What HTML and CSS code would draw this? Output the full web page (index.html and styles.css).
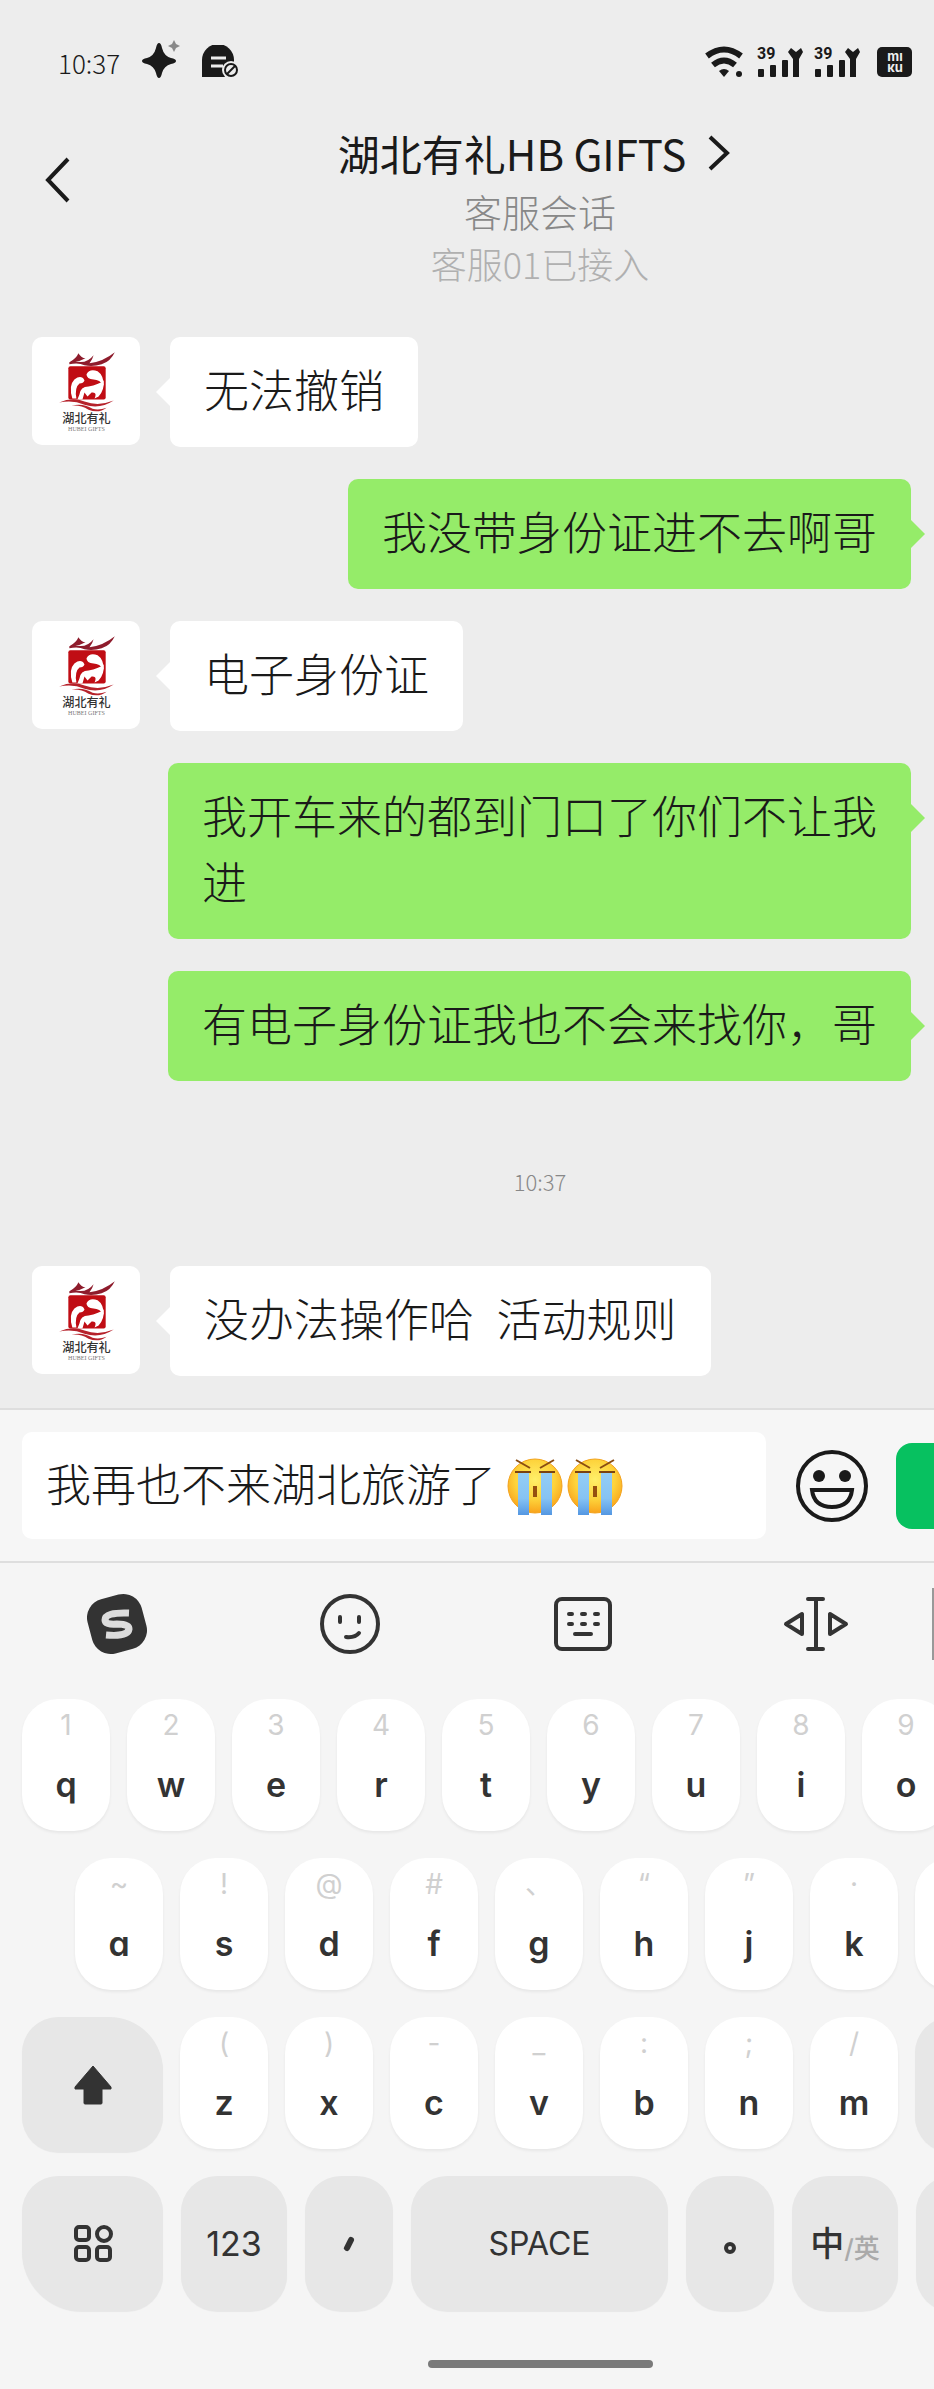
FILE: index.html
```html
<!DOCTYPE html>
<html lang="zh-CN">
<head>
    <meta charset="UTF-8">
    <meta name="viewport" content="width=device-width, initial-scale=1.0">
    <title>湖北有礼HB GIFTS</title>
    <link rel="stylesheet" href="styles.css">
</head>
<body>

    <!-- Shared drawings -->
    <svg class="symbols" aria-hidden="true">
        <symbol id="logo" viewBox="0 0 107 107">
            <path d="M37 25 Q44 21 46 16 Q49 21 53 21 Q48 24 43 24 Q54 27 61 18 Q60 22 57 26 Q71 24 82 15 Q78 24 69 27 Q60 30 52 28 Q46 25 37 27 Z" fill="#8e1c2c"/>
            <rect x="36" y="29" width="37" height="33" rx="2" fill="#c00d14"/>
            <path d="M40 61 Q36 48 42 42 Q49 37 52 43 Q51 46 47 46 Q42 50 44 61 Z" fill="#fff"/>
            <path d="M54 37 Q57 31 65 34 Q71 38 71 48 Q67 42 61 42 Q54 42 54 37 Z" fill="#fff"/>
            <path d="M47 57 Q48 49 56 49 Q66 47 71 43 Q72 52 66 59 L62 61 Q65 54 59 55 L55 59 L52 55 L50 62 L45 62 Z" fill="#fff"/>
            <path d="M27 65 Q40 59 52 64 Q66 69 81 63 Q67 72 52 67 Q40 62 27 65 Z" fill="#b6222b"/>
            <path d="M39 68 Q50 65 60 71 Q66 73 74 70 Q66 76 56 72 Q48 67 39 68 Z" fill="#b6222b"/>
            <text x="54" y="85" text-anchor="middle" class="logo-name">湖北有礼</text>
            <text x="54" y="93" text-anchor="middle" class="logo-sub">HUBEI GIFTS</text>
        </symbol>
        <symbol id="signal" viewBox="0 0 46 32">
            <text x="0" y="13" class="signal-text">39</text>
            <g fill="#1a1a1a">
                <rect x="1" y="23" width="6" height="8" rx="1"/>
                <rect x="13" y="19" width="6" height="12" rx="1"/>
                <rect x="25" y="14" width="6" height="17" rx="1"/>
                <path d="M36 31 V13 L31 6 L34 2 L39 6 L44 2 L46 6 L42 13 V31 Z"/>
            </g>
        </symbol>
        <symbol id="cry" viewBox="0 0 56 60">
            <circle cx="28" cy="30" r="27" fill="url(#face)" stroke="#f3a21c"/>
            <path d="M9 4 L23 12 M47 4 L33 12" stroke="#8a4d12" stroke-width="2" fill="none"/>
            <path d="M11 17 V59 H22 V17 Z M34 17 V59 H45 V17 Z" fill="url(#tear)"/>
            <path d="M8 16 H24 M32 16 H48" stroke="#7a4310" stroke-width="2"/>
            <rect x="26" y="30" width="4" height="11" fill="#96500f"/>
        </symbol>
    </svg>
    <svg class="gradients" aria-hidden="true">
        <radialGradient id="face" cx="50%" cy="38%" r="62%">
            <stop offset="0" stop-color="#fff06a"/>
            <stop offset="0.6" stop-color="#fdd23a"/>
            <stop offset="1" stop-color="#f9a31b"/>
        </radialGradient>
        <linearGradient id="tear" x1="0" y1="0" x2="0" y2="1">
            <stop offset="0" stop-color="#93cdf5"/>
            <stop offset="0.6" stop-color="#86c3f3"/>
            <stop offset="1" stop-color="#5497e2"/>
        </linearGradient>
    </svg>

    <div class="status-bar">
        <time>10:37</time>
        <svg class="icon-star" width="38" height="40" viewBox="0 0 38 40">
            <path d="M17 3 Q19 3 20 8 Q22 16 29 18 Q34 19 34 21 Q34 23 29 24 Q22 26 20 33 Q19 38 17 38 Q15 38 14 33 Q12 26 5 24 Q0 23 0 21 Q0 19 5 18 Q12 16 14 8 Q15 3 17 3 Z" fill="#1a1a1a"/>
            <path d="M32 0 L34 4 L38 6 L34 8 L32 12 L30 8 L26 6 L30 4 Z" fill="#888"/>
        </svg>
        <svg width="37" height="34" viewBox="0 0 37 34">
            <path d="M0 32 V15 A15 15 0 0 1 32 15 V32 Z" fill="#1a1a1a"/>
            <path d="M9 13 H24 M9 21 H21" stroke="#ededed" stroke-width="3"/>
            <circle cx="29" cy="25" r="9" fill="#ededed"/>
            <circle cx="29" cy="25" r="6" fill="none" stroke="#1a1a1a" stroke-width="2"/>
            <path d="M25 29 L33 21" stroke="#1a1a1a" stroke-width="2"/>
        </svg>
        <div class="status-right">
            <svg width="38" height="32" viewBox="0 0 38 32">
                <path d="M2 10 Q19 -3 36 10" fill="none" stroke="#1a1a1a" stroke-width="6"/>
                <path d="M8 19 Q19 10 30 19" fill="none" stroke="#1a1a1a" stroke-width="6"/>
                <path d="M14 25 Q19 21 24 25 L19 31 Z" fill="#1a1a1a"/>
                <circle cx="34" cy="28" r="3" fill="#1a1a1a"/>
            </svg>
            <svg width="46" height="32"><use href="#signal"/></svg>
            <svg width="46" height="32"><use href="#signal"/></svg>
            <svg width="35" height="30" viewBox="0 0 35 30">
                <rect width="35" height="30" rx="5" fill="#1a1a1a"/>
                <text x="18" y="14" text-anchor="middle" class="badge-text">mı</text>
                <text x="18" y="25" text-anchor="middle" class="badge-text">ĸu</text>
            </svg>
        </div>
    </div>

    <header class="chat-header">
        <button class="back" type="button" aria-label="返回">
            <svg width="26" height="46" viewBox="0 0 26 46"><path d="M23 2 L3 23 L23 44" fill="none" stroke="#1a1a1a" stroke-width="4"/></svg>
        </button>
        <div class="chat-title">
            <h1>湖北有礼HB GIFTS
                <svg width="34" height="36" viewBox="0 0 34 36"><path d="M2 2 L19 18 L2 34" fill="none" stroke="#1a1a1a" stroke-width="4"/></svg>
            </h1>
            <p class="kind">客服会话</p>
            <p class="agent">客服01已接入</p>
        </div>
    </header>

    <main class="messages">
        <div class="message">
            <svg class="avatar"><use href="#logo"/></svg>
            <p class="bubble">无法撤销</p>
        </div>
        <div class="message mine">
            <p class="bubble">我没带身份证进不去啊哥</p>
        </div>
        <div class="message">
            <svg class="avatar"><use href="#logo"/></svg>
            <p class="bubble">电子身份证</p>
        </div>
        <div class="message mine">
            <p class="bubble">我开车来的都到门口了你们不让我进</p>
        </div>
        <div class="message mine">
            <p class="bubble">有电子身份证我也不会来找你，哥</p>
        </div>
        <time class="divider">10:37</time>
        <div class="message">
            <svg class="avatar"><use href="#logo"/></svg>
            <p class="bubble">没办法操作哈&ensp;活动规则</p>
        </div>
    </main>

    <form class="compose">
        <div class="compose-box">
            <input type="text" aria-label="消息" value="我再也不来湖北旅游了">
            <svg width="56" height="60"><use href="#cry"/></svg>
            <svg width="56" height="60"><use href="#cry"/></svg>
        </div>
        <button class="emoji" type="button" aria-label="表情">
            <svg width="74" height="74" viewBox="0 0 74 74">
                <circle cx="37" cy="37" r="34" fill="none" stroke="#1a1a1a" stroke-width="4"/>
                <circle cx="24" cy="27" r="6" fill="#1a1a1a"/>
                <circle cx="50" cy="27" r="6" fill="#1a1a1a"/>
                <path d="M17 41 H57 Q55 58 37 58 Q19 58 17 41 Z" fill="none" stroke="#1a1a1a" stroke-width="4"/>
            </svg>
        </button>
        <button class="send" type="button" aria-label="发送"></button>
    </form>

    <section class="keyboard">
        <div class="tools">
            <button type="button" aria-label="搜狗输入法">
                <svg width="64" height="64" viewBox="0 0 64 64">
                    <rect x="4" y="4" width="56" height="56" rx="19" fill="#333" transform="rotate(-15 32 32)"/>
                    <path d="M44 21 Q20 20 20 28 Q20 33 32 32 Q44 32 44 37 Q43 45 21 43" fill="none" stroke="#dcdcdc" stroke-width="7"/>
                </svg>
            </button>
            <button type="button" aria-label="表情面板">
                <svg width="62" height="62" viewBox="0 0 62 62">
                    <circle cx="31" cy="31" r="28" fill="none" stroke="#333" stroke-width="4"/>
                    <path d="M21 24 V29 M40 24 V29" stroke="#333" stroke-width="4" stroke-linecap="round"/>
                    <path d="M27 44 Q36 45 40 40" fill="none" stroke="#333" stroke-width="4" stroke-linecap="round"/>
                </svg>
            </button>
            <button type="button" aria-label="键盘">
                <svg width="58" height="54" viewBox="0 0 58 54">
                    <rect x="2" y="2" width="54" height="50" rx="6" fill="none" stroke="#333" stroke-width="4"/>
                    <path d="M15 17 H18 M28 17 H31 M41 17 H44 M15 27 H18 M28 27 H31 M41 27 H44 M21 37 H37" stroke="#333" stroke-width="4" stroke-linecap="round"/>
                </svg>
            </button>
            <button type="button" aria-label="光标">
                <svg width="66" height="56" viewBox="0 0 66 56">
                    <path d="M25 3 H40 M25 53 H40 M33 3 V53" stroke="#333" stroke-width="4" stroke-linecap="round"/>
                    <path d="M19 18 V38 L3 28 Z M47 18 V38 L63 28 Z" fill="none" stroke="#333" stroke-width="4" stroke-linejoin="round"/>
                </svg>
            </button>
        </div>

        <div class="key-row">
            <button class="key"><small>1</small>q</button>
            <button class="key"><small>2</small>w</button>
            <button class="key"><small>3</small>e</button>
            <button class="key"><small>4</small>r</button>
            <button class="key"><small>5</small>t</button>
            <button class="key"><small>6</small>y</button>
            <button class="key"><small>7</small>u</button>
            <button class="key"><small>8</small>i</button>
            <button class="key"><small>9</small>o</button>
        </div>
        <div class="key-row indent">
            <button class="key"><small>~</small>a</button>
            <button class="key"><small>!</small>s</button>
            <button class="key"><small>@</small>d</button>
            <button class="key"><small>#</small>f</button>
            <button class="key"><small>、</small>g</button>
            <button class="key"><small>“</small>h</button>
            <button class="key"><small>”</small>j</button>
            <button class="key"><small>·</small>k</button>
            <button class="key" aria-label="l"></button>
        </div>
        <div class="key-row">
            <button class="key dark wide shift" aria-label="上档">
                <svg width="40" height="42" viewBox="0 0 40 42"><path d="M20 2 L38 23 V25 H29 V39 Q29 40 28 40 H12 Q11 40 11 39 V25 H2 V23 Z" fill="#333" stroke="#333" stroke-linejoin="round"/></svg>
            </button>
            <button class="key"><small>(</small>z</button>
            <button class="key"><small>)</small>x</button>
            <button class="key"><small>-</small>c</button>
            <button class="key"><small>_</small>v</button>
            <button class="key"><small>:</small>b</button>
            <button class="key"><small>;</small>n</button>
            <button class="key"><small>/</small>m</button>
            <button class="key dark" aria-label="删除"></button>
        </div>
        <div class="key-row bottom">
            <button class="key dark wide menu" aria-label="菜单">
                <svg width="40" height="38" viewBox="0 0 40 38" fill="none" stroke="#333" stroke-width="4">
                    <rect x="3" y="2" width="13" height="13" rx="3"/>
                    <circle cx="31" cy="9" r="7"/>
                    <rect x="3" y="22" width="13" height="13" rx="3"/>
                    <rect x="24" y="22" width="13" height="13" rx="3"/>
                </svg>
            </button>
            <button class="key dark mid numbers">123</button>
            <button class="key dark" aria-label="，">
                <svg width="12" height="16" viewBox="0 0 12 16"><path d="M8 4 L4 12" stroke="#333" stroke-width="6" stroke-linecap="round"/></svg>
            </button>
            <button class="key dark space">SPACE</button>
            <button class="key dark stop" aria-label="。">
                <svg width="12" height="12" viewBox="0 0 12 12"><circle cx="6" cy="6" r="4" fill="none" stroke="#333" stroke-width="4"/></svg>
            </button>
            <button class="key dark mid lang">中<span>/英</span></button>
            <button class="key dark" aria-label="换行"></button>
        </div>
        <div class="home-bar"></div>
    </section>

</body>
</html>
```
FILE: styles.css
```css
* {
    box-sizing: border-box;
}
body {
    margin: 0;
    background-color: #ededed;
    color: #1a1a1a;
    font-family: "Noto Sans CJK SC", sans-serif;
    font-weight: 300;
    overflow-x: hidden;
}
h1, p {
    margin: 0;
    font-weight: inherit;
}
button {
    padding: 0;
    border: none;
    background: none;
    color: inherit;
    cursor: pointer;
}
svg {
    display: block;
    flex: none;
}
.symbols {
    display: none;
}
.gradients {
    position: absolute;
    width: 0;
    height: 0;
}

/* Status bar */
.status-bar {
    display: flex;
    align-items: center;
    gap: 22px;
    height: 124px;
    padding: 0 22px 0 58px;
    font-size: 26px;
}
.icon-star {
    margin-bottom: 4px;
}
.status-right {
    display: flex;
    align-items: center;
    gap: 11px;
    margin-left: auto;
}
.status-right svg:first-child {
    margin-right: 3px;
}
.status-right svg:last-child {
    margin-left: 6px;
}
.signal-text {
    font: bold 16px Roboto, sans-serif;
    fill: #1a1a1a;
}
.badge-text {
    font: bold 13px Inter, sans-serif;
    fill: #ededed;
}

/* Header */
.chat-header {
    display: grid;
    grid-template-columns: 146px 1fr;
    padding-bottom: 51px;
    text-align: center;
}
.back {
    height: 112px;
    padding-left: 45px;
}
.chat-title h1 {
    display: flex;
    align-items: center;
    justify-content: center;
    gap: 22px;
    font-size: 42px;
    font-weight: 400;
    line-height: 58px;
}
.kind {
    font-size: 38px;
    line-height: 58px;
    color: #888;
}
.agent {
    font-size: 36px;
    line-height: 46px;
    color: #b0b0b0;
}

/* Messages */
.messages {
    display: flex;
    flex-direction: column;
    gap: 32px;
    padding: 0 23px 32px 32px;
}
.message {
    display: flex;
    align-items: flex-start;
    gap: 30px;
}
.mine {
    justify-content: flex-end;
    padding-left: 136px;
}
.avatar {
    width: 108px;
    height: 108px;
    border-radius: 10px;
    background-color: #fff;
}
.logo-name {
    font-size: 12px;
    font-weight: 500;
    fill: #333;
}
.logo-sub {
    font: 6px "Liberation Serif", serif;
    fill: #777;
}
.bubble {
    position: relative;
    padding: 19px 34px 25px;
    border-radius: 10px;
    background-color: #fff;
    font-size: 45px;
    line-height: 66px;
}
.mine .bubble {
    background-color: #95ec69;
}
.bubble::before {
    content: "";
    position: absolute;
    top: 41px;
    right: 100%;
    border: 14px solid transparent;
    border-left: none;
    border-right-color: #fff;
}
.mine .bubble::before {
    right: auto;
    left: 100%;
    border: 14px solid transparent;
    border-right: none;
    border-left-color: #95ec69;
}
.divider {
    padding: 18px 0 2px 137px;
    font-size: 22px;
    line-height: 101px;
    text-align: center;
    color: #888;
}

/* Compose bar */
.compose {
    display: flex;
    align-items: center;
    height: 153px;
    padding-left: 22px;
    border-top: 2px solid #dedede;
    background-color: #f6f6f6;
}
.compose-box {
    flex: 1;
    display: flex;
    align-items: center;
    gap: 4px;
    height: 107px;
    padding-left: 24px;
    border-radius: 10px;
    background-color: #fff;
}
.compose-box input {
    width: 457px;
    padding: 0 0 6px;
    border: none;
    outline: none;
    background: none;
    color: inherit;
    font: inherit;
    font-size: 45px;
}
.emoji {
    margin: 0 27px 0 29px;
}
.send {
    width: 38px;
    height: 86px;
    border-radius: 16px 0 0 16px;
    background-color: #07c160;
}

/* Keyboard */
.keyboard {
    overflow: hidden;
    border-top: 2px solid #dedede;
    background-color: #f5f5f5;
    font-family: Inter, sans-serif;
    color: #333;
}
.tools {
    display: grid;
    grid-template-columns: repeat(4, 1fr);
    height: 72px;
    margin: 25px 0 39px;
    border-right: 2px solid #999;
}
.tools button {
    display: flex;
    align-items: center;
    justify-content: center;
}
.key-row {
    display: flex;
    gap: 17px;
    padding-left: 22px;
    margin-bottom: 27px;
}
.key-row.indent {
    padding-left: 75px;
}
.key {
    flex: none;
    display: flex;
    flex-direction: column;
    align-items: center;
    width: 88px;
    height: 132px;
    padding-top: 9px;
    border-radius: 36px;
    background-color: #fff;
    box-shadow: 0 2px 3px rgba(0,0,0,0.06);
    font-family: Inter, "Noto Sans CJK SC", sans-serif;
    font-size: 34px;
    font-weight: 600;
    font-feature-settings: "cv11";
    line-height: 44px;
}
.key small {
    margin-bottom: 21px;
    font-size: 28px;
    font-weight: 400;
    line-height: 34px;
    color: #d0d0d0;
}
.key.dark {
    flex-direction: row;
    justify-content: center;
    height: 135px;
    margin-bottom: -3px;
    padding: 0;
    background-color: #e7e7e7;
    box-shadow: 0 1px 1px rgba(0,0,0,0.06);
}
.key.wide { width: 141px; }
.key.mid { width: 106px; }
.key.space {
    width: 257px;
    font-size: 32px;
    font-weight: 400;
}
.key.shift { border-top-right-radius: 54px; }
.key.menu { border-bottom-left-radius: 60px; }
.key.numbers { font-weight: 400; }
.key.stop { padding-top: 8px; }
.key.lang { font-weight: 500; }
.key.lang span {
    padding-top: 10px;
    font-size: 26px;
    color: #aaa;
}
.bottom {
    gap: 18px;
    margin-bottom: 52px;
}
/* Centred under the space key's row, like the chat title */
.home-bar {
    display: flex;
    justify-content: center;
    padding: 0 0 21px 146px;
}
.home-bar::before {
    content: "";
    width: 225px;
    height: 8px;
    border-radius: 4px;
    background-color: #7a7a7a;
}
```
